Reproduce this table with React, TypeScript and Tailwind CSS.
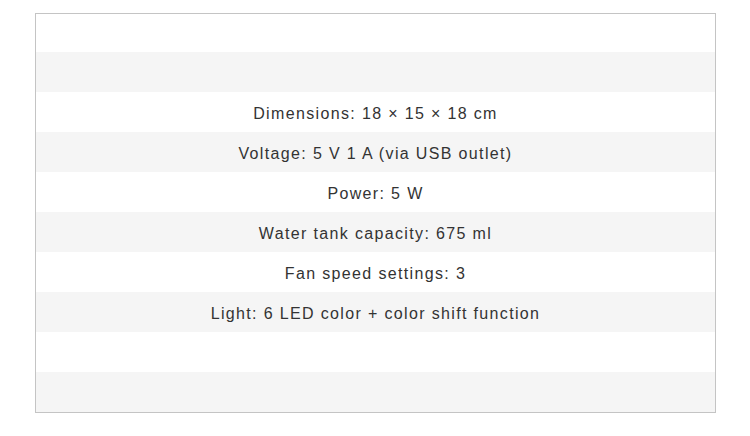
import React from "react";

const rows = [
  "",
  "",
  "Dimensions: 18 × 15 × 18 cm",
  "Voltage: 5 V 1 A (via USB outlet)",
  "Power: 5 W",
  "Water tank capacity: 675 ml",
  "Fan speed settings: 3",
  "Light: 6 LED color + color shift function",
  "",
  "",
];

export default function App() {
  return (
    <div className="w-[750px] h-[436px] bg-white pt-[13px] pl-[35px]">
      <div className="w-[681px] border border-[#c4c4c4] flex flex-col">
        {rows.map((r, i) => (
          <div
            key={i}
            className={`${i === 0 ? "h-[38px]" : "h-[40px]"} ${i % 2 === 1 ? "bg-[#f5f5f5]" : "bg-white"} flex items-center justify-center pt-[3px] text-[16px] tracking-[1.35px] text-[#333333]`}
            style={{ fontFamily: '"Liberation Sans", Arial, sans-serif' }}
          >
            {r}
          </div>
        ))}
      </div>
    </div>
  );
}
